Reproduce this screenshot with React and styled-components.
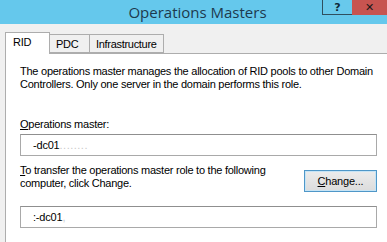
import React from "react";
import styled, { createGlobalStyle } from "styled-components";

const GlobalStyle = createGlobalStyle`
  html, body {
    margin: 0;
    padding: 0;
    background: #f0f0f0;
    overflow: hidden;
  }
  body {
    font-family: "Liberation Sans", Arial, sans-serif;
    font-size: 11px;
    color: #000;
  }
`;

const Window = styled.div`
  width: 387px;
  height: 242px;
  display: flex;
  flex-direction: column;
  background: #f0f0f0;
`;

const TitleBar = styled.div`
  position: relative;
  height: 24px;
  flex: none;
  background: #65c8ec;
  display: flex;
  align-items: center;
  justify-content: center;
`;

const Title = styled.div`
  font-family: "Open Sans", "Noto Sans", sans-serif;
  font-size: 15px;
  color: #1d3a4e;
  padding-left: 8px;
`;

const Controls = styled.div`
  position: absolute;
  top: 0;
  right: 0;
  display: flex;
`;

const ControlButton = styled.div`
  height: 15px;
  width: ${(p) => p.$w}px;
  display: flex;
  align-items: center;
  justify-content: center;
  font-family: "DejaVu Sans", sans-serif;
  font-weight: bold;
  font-size: 11px;
  box-sizing: border-box;
  color: ${(p) => (p.$close ? "#1a1a1a" : "#0f2a3a")};
  background: ${(p) => (p.$close ? "#c75450" : "#68c9ec")};
  border: ${(p) => (p.$close ? "none" : "1px solid #2f4f5f")};
  border-top: none;
  border-right: none;
`;

const TabStrip = styled.div`
  height: 29px;
  flex: none;
  padding-left: 5px;
  display: flex;
  align-items: flex-end;
  box-sizing: border-box;
`;

const Tab = styled.div`
  position: relative;
  box-sizing: border-box;
  height: ${(p) => (p.$active ? 22 : 19)}px;
  margin-bottom: ${(p) => (p.$active ? -1 : 0)}px;
  padding: ${(p) => (p.$active ? "2px 7px 0 7px" : "2px 6px 0 6px")};
  width: ${(p) => p.$w}px;
  background: ${(p) => (p.$active ? "#fff" : "#f0f0f0")};
  border: 1px solid #adadad;
  border-bottom: ${(p) => (p.$active ? "none" : "1px solid #adadad")};
  border-left: ${(p) => (p.$first ? "1px solid #adadad" : "none")};
  z-index: ${(p) => (p.$active ? 1 : 0)};
  font-size: 11px;
  line-height: 14px;
  letter-spacing: -0.3px;
  white-space: nowrap;
`;

const Panel = styled.div`
  flex: 1;
  margin-left: 5px;
  background: #fff;
  border-top: 1px solid #adadad;
  border-left: 1px solid #adadad;
  padding: 11px 10px 0 14px;
  display: flex;
  flex-direction: column;
`;

const Text = styled.p`
  margin: 0;
  font-size: 11px;
  line-height: 13px;
  letter-spacing: -0.25px;
  color: #000;
`;

const Label = styled(Text)`
  margin-top: ${(p) => p.$top}px;
`;

const Key = styled.span`
  text-decoration: underline;
`;

const Field = styled.div`
  margin-top: ${(p) => p.$top}px;
  height: 22px;
  box-sizing: border-box;
  border: 1px solid #a9a9a9;
  border-top-color: #8f8f8f;
  padding-left: 12px;
  display: flex;
  align-items: center;
  font-size: 11px;
  letter-spacing: -0.2px;
`;

const Smudge = styled.span`
  color: #c9c9c9;
  letter-spacing: 0.5px;
`;

const ChangeRow = styled.div`
  margin-top: 8px;
  display: flex;
  align-items: flex-start;
  justify-content: space-between;
`;

const ChangeButton = styled.div`
  width: 73px;
  height: 22px;
  margin-top: 6px;
  box-sizing: border-box;
  border: 1px solid #4f97c8;
  background: linear-gradient(#ececec, #dcdcdc);
  box-shadow: inset 0 0 0 1px #c7e4f5;
  display: flex;
  align-items: center;
  justify-content: center;
  font-size: 11px;
  letter-spacing: -0.2px;
`;

export default function App() {
  return (
    <Window>
      <GlobalStyle />
      <TitleBar>
        <Title>Operations Masters</Title>
        <Controls>
          <ControlButton $w={30}>?</ControlButton>
          <ControlButton $w={35} $close>
            ✕
          </ControlButton>
        </Controls>
      </TitleBar>
      <TabStrip>
        <Tab $active $first $w={45}>
          RID
        </Tab>
        <Tab $w={40}>PDC</Tab>
        <Tab $w={74}>Infrastructure</Tab>
      </TabStrip>
      <Panel>
        <Text>
          The operations master manages the allocation of RID pools to other Domain
          <br />
          Controllers. Only one server in the domain performs this role.
        </Text>
        <Label $top={27}>
          <Key>O</Key>perations master:
        </Label>
        <Field $top={3}>
          -dc01<Smudge>........</Smudge>
        </Field>
        <ChangeRow>
          <Text>
            <Key>T</Key>o transfer the operations master role to the following
            <br />
            computer, click Change.
          </Text>
          <ChangeButton>
            <span>
              <Key>C</Key>hange...
            </span>
          </ChangeButton>
        </ChangeRow>
        <Field $top={14}>
          :-dc01<Smudge>,</Smudge>
        </Field>
      </Panel>
    </Window>
  );
}
